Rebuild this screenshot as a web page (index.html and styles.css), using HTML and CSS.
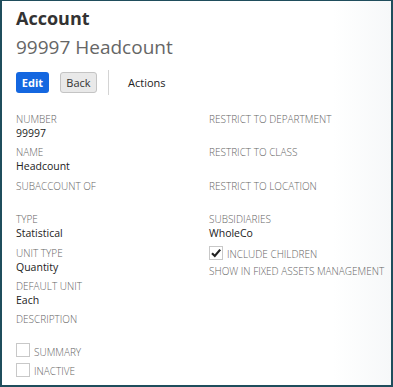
FILE: index.html
```html
<!DOCTYPE html>
<html lang="en">
<head>
    <meta charset="UTF-8">
    <meta name="viewport" content="width=device-width, initial-scale=1.0">
    <title>Account</title>
    <link rel="stylesheet" href="styles.css">
</head>
<body>
    <div class="frame">
        <div class="page-header">
            <h1>Account</h1>
            <h2>99997 Headcount</h2>
        </div>
        <div class="toolbar">
            <button class="btn btn-primary">Edit</button>
            <button class="btn btn-secondary">Back</button>
            <span class="divider"></span>
            <span class="actions">Actions</span>
        </div>
        <div class="fields">
            <div class="column">
                <div class="field">
                    <div class="label">Number</div>
                    <div class="value">99997</div>
                </div>
                <div class="field">
                    <div class="label">Name</div>
                    <div class="value">Headcount</div>
                </div>
                <div class="field">
                    <div class="label">Subaccount of</div>
                    <div class="value"></div>
                </div>
                <div class="field">
                    <div class="label">Type</div>
                    <div class="value">Statistical</div>
                </div>
                <div class="field">
                    <div class="label">Unit type</div>
                    <div class="value">Quantity</div>
                </div>
                <div class="field">
                    <div class="label">Default unit</div>
                    <div class="value">Each</div>
                </div>
                <div class="field short">
                    <div class="label">Description</div>
                    <div class="value"></div>
                </div>
                <div class="check-row">
                    <span class="box"></span>
                    <span class="label">Summary</span>
                </div>
                <div class="check-row">
                    <span class="box"></span>
                    <span class="label">Inactive</span>
                </div>
            </div>
            <div class="column">
                <div class="field">
                    <div class="label">Restrict to department</div>
                    <div class="value"></div>
                </div>
                <div class="field">
                    <div class="label">Restrict to class</div>
                    <div class="value"></div>
                </div>
                <div class="field">
                    <div class="label">Restrict to location</div>
                    <div class="value"></div>
                </div>
                <div class="field compact">
                    <div class="label">Subsidiaries</div>
                    <div class="value">WholeCo</div>
                </div>
                <div class="check-row include">
                    <span class="box">
                        <svg width="12" height="12" viewBox="0 0 12 12"><path d="M2 6.2 L4.8 9 L10.2 2.6" fill="none" stroke="#222" stroke-width="2.2"/></svg>
                    </span>
                    <span class="label">Include children</span>
                </div>
                <div class="field">
                    <div class="label">Show in fixed assets management</div>
                </div>
            </div>
        </div>
    </div>
</body>
</html>
```

FILE: styles.css
```css
* {
    margin: 0;
    padding: 0;
    box-sizing: border-box;
}

body {
    font-family: "Open Sans", Arial, sans-serif;
    background-color: #fff;
    width: 393px;
    height: 387px;
    overflow: hidden;
}

.frame {
    width: 393px;
    height: 387px;
    border: 2px solid #1f4d5c;
    border-top-width: 1px;
    padding: 5px 0 0 14px;
    background: linear-gradient(to right, #fff 85%, #f6f8f9);
}

h1 {
    font-size: 18px;
    font-weight: 700;
    color: #333;
    line-height: 25px;
}

h2 {
    font-size: 19px;
    font-weight: 400;
    color: #666;
    line-height: 28px;
    margin-top: 2px;
}

.toolbar {
    display: flex;
    align-items: center;
    margin-top: 9px;
    height: 25px;
}

.btn {
    font-family: "Open Sans", Arial, sans-serif;
    font-size: 11px;
    height: 21px;
    border-radius: 3px;
    cursor: pointer;
}

.btn-primary {
    width: 33px;
    background-color: #1467e0;
    color: #fff;
    font-weight: 700;
    border: none;
}

.btn-secondary {
    width: 37px;
    margin-left: 11px;
    background-color: #e9e9e9;
    color: #333;
    border: 1px solid #c4c4c4;
}

.divider {
    width: 1px;
    height: 25px;
    background-color: #d4d4d4;
    margin-left: 11px;
}

.actions {
    font-size: 11px;
    color: #222;
    margin-left: 19px;
}

.fields {
    display: grid;
    grid-template-columns: 193px 1fr;
    margin-top: 17px;
}

.field {
    min-height: 33.4px;
}

.field.compact {
    min-height: 31px;
}

.field.short {
    min-height: 28px;
}

.label {
    font-size: 10px;
    font-weight: 300;
    color: #666;
    text-transform: uppercase;
    line-height: 14px;
}

.value {
    font-size: 10.5px;
    color: #222;
    line-height: 14px;
    min-height: 14px;
}

.check-row {
    display: flex;
    align-items: center;
    height: 19.5px;
}

.check-row .label {
    margin-left: 4px;
    margin-top: 3px;
}

.check-row.include {
    height: 19px;
    margin-bottom: 2px;
}

.box {
    width: 14px;
    height: 14px;
    border: 1px solid #c8c8c8;
    background-color: #fff;
    display: flex;
    align-items: center;
    justify-content: center;
}
```
